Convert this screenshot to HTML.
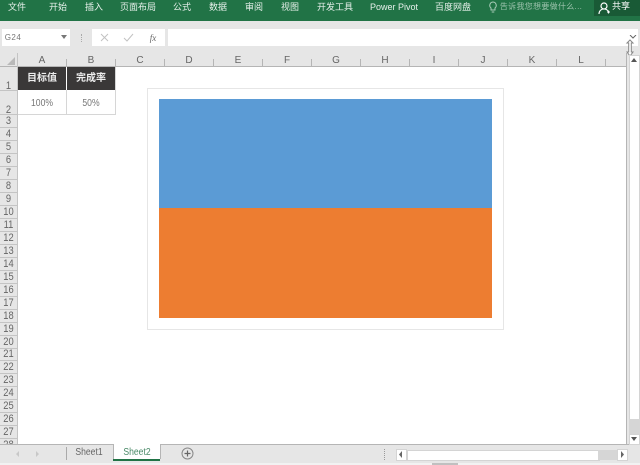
<!DOCTYPE html>
<html><head><meta charset="utf-8">
<style>
html,body{margin:0;padding:0;background:#fff}
#p{position:relative;width:640px;height:465px;overflow:hidden;background:#e6e6e6;font-family:"Liberation Sans","Noto Sans CJK SC",sans-serif;color:#444;filter:blur(.3px)}
#p div{position:absolute}
.t{white-space:nowrap;line-height:12px;font-size:9px;transform:translateX(-50%);text-align:center}
.s{transform:translateX(-50%) scaleX(.86)}
.r{color:#e6f0ea;top:1px}
.c{color:#666;top:55px;font-size:10px}
.n{color:#666;left:0;width:17px;text-align:center;font-size:11px;line-height:12px;transform:scaleX(.85)}
.hl{left:0;width:17px;height:1px;background:#c4c4c4}
.cl{top:59px;width:1px;height:7px;background:#b5b5b5}
</style></head>
<body><div id="p">
<div style="left:0;top:0;width:640px;height:21px;background:#217346"></div>
<div style="left:594px;top:0;width:46px;height:16px;background:#195a36"></div>
<div class="t r" style="left:17px">文件</div>
<div class="t r" style="left:58px">开始</div>
<div class="t r" style="left:94px">插入</div>
<div class="t r" style="left:138px">页面布局</div>
<div class="t r" style="left:182px">公式</div>
<div class="t r" style="left:218px">数据</div>
<div class="t r" style="left:254px">审阅</div>
<div class="t r" style="left:290px">视图</div>
<div class="t r" style="left:335px">开发工具</div>
<div class="t r" style="left:394px">Power Pivot</div>
<div class="t r" style="left:453px">百度网盘</div>
<div class="t" style="left:541px;top:1px;color:#9dc3ad;font-size:8px;letter-spacing:.3px">告诉我您想要做什么...</div>
<div class="t" style="left:621px;top:0;color:#fff">共享</div>
<svg style="position:absolute;left:487px;top:0" width="12" height="14" viewBox="0 0 12 14"><path d="M6 2a3.400 3.400 0 0 0-2 6v2h4V8a3.400 3.400 0 0 0-2-6zM4.700 12h2.600" fill="none" stroke="#a9cbb8"/></svg>
<svg style="position:absolute;left:598px;top:1px" width="12" height="14" viewBox="0 0 12 14"><circle cx="6" cy="5" r="3" fill="none" stroke="#fff" stroke-width="1.200"/><path d="M1 13c0-3 2-5 5-5 1.500 0 3 .5 4 2M9 11h3M10.500 9.500v3" fill="none" stroke="#fff" stroke-width="1.100"/></svg>

<div style="left:2px;top:29px;width:68px;height:17px;background:#fff"></div>
<div class="t" style="left:13px;top:32px;color:#777;font-size:8px;letter-spacing:.5px">G24</div>
<svg style="position:absolute;left:61px;top:35px" width="7" height="5"><path d="M0 0h6L3 4z" fill="#777"/></svg>
<div style="left:81px;top:34px;width:1px;height:8px;border-left:1px dotted #aaa"></div>
<div style="left:92px;top:29px;width:73px;height:17px;background:#fff"></div>
<svg style="position:absolute;left:99px;top:33px" width="66" height="10"><path d="M2 1l7 7M9 1L2 8" stroke="#c2c2c2" fill="none"/><path d="M25 5l3 3 6-7" stroke="#c2c2c2" fill="none"/></svg>
<div class="t" style="left:153px;top:32px;font-family:'Liberation Serif',serif;font-style:italic;color:#666;font-size:9px">fx</div>
<div style="left:168px;top:29px;width:470px;height:17px;background:#fff"></div>
<svg style="position:absolute;left:629px;top:35px" width="8" height="5"><path d="M1 0l3 3 3-3" stroke="#666" fill="none"/></svg>
<svg style="position:absolute;left:625px;top:39px" width="10" height="18"><path d="M5 1L8 4H6.300V13H8L5 17 2 13H3.700V4H2z" fill="#fff" stroke="#888"/></svg>

<div style="left:0;top:53px;width:626px;height:13px;background:#e6e6e6"></div>
<div style="left:17px;top:66px;width:609px;height:378px;background:#fff"></div>
<div style="left:0;top:66px;width:626px;height:1px;background:#b5b5b5"></div>
<div style="left:17px;top:53px;width:1px;height:391px;background:#c4c4c4"></div>
<div style="left:626px;top:53px;width:1px;height:391px;background:#b5b5b5"></div>
<svg style="position:absolute;left:7px;top:57px" width="9" height="9"><path d="M8 0v8H0z" fill="#b9b9b9"/></svg>

<div class="cl" style="left:66px"></div><div class="cl" style="left:115px"></div><div class="cl" style="left:164px"></div><div class="cl" style="left:213px"></div><div class="cl" style="left:262px"></div><div class="cl" style="left:311px"></div><div class="cl" style="left:360px"></div><div class="cl" style="left:409px"></div><div class="cl" style="left:458px"></div><div class="cl" style="left:507px"></div><div class="cl" style="left:556px"></div><div class="cl" style="left:605px"></div>
<div class="t c" style="left:42px">A</div><div class="t c" style="left:91px">B</div><div class="t c" style="left:140px">C</div><div class="t c" style="left:189px">D</div><div class="t c" style="left:238px">E</div><div class="t c" style="left:287px">F</div><div class="t c" style="left:336px">G</div><div class="t c" style="left:385px">H</div><div class="t c" style="left:434px">I</div><div class="t c" style="left:483px">J</div><div class="t c" style="left:532px">K</div><div class="t c" style="left:581px">L</div>

<div class="hl" style="top:90px"></div><div class="hl" style="top:114px"></div><div class="hl" style="top:127px"></div><div class="hl" style="top:140px"></div><div class="hl" style="top:153px"></div><div class="hl" style="top:166px"></div><div class="hl" style="top:179px"></div><div class="hl" style="top:192px"></div><div class="hl" style="top:205px"></div><div class="hl" style="top:218px"></div><div class="hl" style="top:231px"></div><div class="hl" style="top:244px"></div><div class="hl" style="top:257px"></div><div class="hl" style="top:270px"></div><div class="hl" style="top:283px"></div><div class="hl" style="top:296px"></div><div class="hl" style="top:309px"></div><div class="hl" style="top:322px"></div><div class="hl" style="top:335px"></div><div class="hl" style="top:348px"></div><div class="hl" style="top:360px"></div><div class="hl" style="top:373px"></div><div class="hl" style="top:386px"></div><div class="hl" style="top:399px"></div><div class="hl" style="top:412px"></div><div class="hl" style="top:425px"></div><div class="hl" style="top:438px"></div>
<div class="n" style="top:80px">1</div><div class="n" style="top:104px">2</div><div class="n" style="top:115px">3</div><div class="n" style="top:128px">4</div><div class="n" style="top:141px">5</div><div class="n" style="top:154px">6</div><div class="n" style="top:167px">7</div><div class="n" style="top:180px">8</div><div class="n" style="top:193px">9</div><div class="n" style="top:206px">10</div><div class="n" style="top:219px">11</div><div class="n" style="top:232px">12</div><div class="n" style="top:245px">13</div><div class="n" style="top:258px">14</div><div class="n" style="top:271px">15</div><div class="n" style="top:284px">16</div><div class="n" style="top:297px">17</div><div class="n" style="top:310px">18</div><div class="n" style="top:323px">19</div><div class="n" style="top:336px">20</div><div class="n" style="top:348px">21</div><div class="n" style="top:361px">22</div><div class="n" style="top:374px">23</div><div class="n" style="top:387px">24</div><div class="n" style="top:400px">25</div><div class="n" style="top:413px">26</div><div class="n" style="top:426px">27</div>
<div class="n" style="top:439px;height:5px;overflow:hidden">28</div>

<div style="left:18px;top:67px;width:48px;height:23px;background:#3a3838"></div>
<div style="left:67px;top:67px;width:48px;height:23px;background:#3a3838"></div>
<div class="t" style="left:42px;top:73px;color:#eee;font-size:10px;font-weight:bold">目标值</div>
<div class="t" style="left:91px;top:73px;color:#eee;font-size:10px;font-weight:bold">完成率</div>
<div class="t s" style="left:42px;top:98px;color:#777;font-size:10px">100%</div>
<div class="t s" style="left:91px;top:98px;color:#777;font-size:10px">50%</div>
<div style="left:66px;top:90px;width:1px;height:24px;background:#d6d6d6"></div>
<div style="left:115px;top:67px;width:1px;height:48px;background:#d6d6d6"></div>
<div style="left:18px;top:114px;width:98px;height:1px;background:#d6d6d6"></div>

<div style="left:147px;top:88px;width:355px;height:240px;background:#fff;border:1px solid #e6e6e6"></div>
<div style="left:159px;top:99px;width:333px;height:109px;background:#5b9bd5"></div>
<div style="left:159px;top:208px;width:333px;height:110px;background:#ed7d31"></div>

<div style="left:0;top:444px;width:640px;height:1px;background:#b5b5b5"></div>
<svg style="position:absolute;left:15px;top:450px" width="28" height="8"><path d="M4 1L1 4l3 3zM21 1l3 3-3 3z" fill="#c8c8c8"/></svg>
<div style="left:66px;top:447px;width:1px;height:13px;background:#aaa"></div>
<div style="left:113px;top:444px;width:46px;height:15px;background:#fff;border-left:1px solid #b5b5b5;border-right:1px solid #b5b5b5"></div>
<div style="left:113px;top:459px;width:47px;height:2px;background:#217346"></div>
<div class="t s" style="left:89px;top:447px;color:#666;font-size:10px">Sheet1</div>
<div class="t s" style="left:137px;top:447px;color:#4a8a68;font-size:10px">Sheet2</div>
<svg style="position:absolute;left:181px;top:447px" width="13" height="13"><circle cx="6.500" cy="6.500" r="5.500" fill="none" stroke="#888"/><path d="M3.500 6.500h6M6.500 3.500v6" stroke="#666" stroke-width="1.200"/></svg>
<div style="left:384px;top:449px;width:1px;height:11px;border-left:1px dotted #999"></div>

<div style="left:396px;top:449px;width:9px;height:10px;background:#fff;border:1px solid #d4d4d4"></div>
<svg style="position:absolute;left:398px;top:450px" width="6" height="9"><path d="M4 1L1 4.500 4 8z" fill="#666"/></svg>
<div style="left:407px;top:450px;width:191px;height:9px;background:#fff;border:1px solid #d4d4d4"></div>
<div style="left:598px;top:450px;width:19px;height:10px;background:#d6d6d6"></div>
<div style="left:617px;top:449px;width:9px;height:10px;background:#fff;border:1px solid #d4d4d4"></div>
<svg style="position:absolute;left:620px;top:450px" width="6" height="9"><path d="M1 1l3 3.500L1 8z" fill="#666"/></svg>
<div style="left:0;top:463px;width:640px;height:2px;background:#f2f2f2"></div>
<div style="left:432px;top:463px;width:26px;height:2px;background:#c0c0c0"></div>

<div style="left:629px;top:55px;width:9px;height:10px;background:#fff;border:1px solid #d4d4d4"></div>
<svg style="position:absolute;left:630px;top:58px" width="8" height="5"><path d="M4 0L7 4H1z" fill="#555"/></svg>
<div style="left:629px;top:66px;width:9px;height:353px;background:#fff;border-left:1px solid #d4d4d4;border-right:1px solid #d4d4d4"></div>
<div style="left:629px;top:419px;width:11px;height:15px;background:#d6d6d6"></div>
<div style="left:629px;top:434px;width:9px;height:9px;background:#fff;border:1px solid #d4d4d4"></div>
<svg style="position:absolute;left:630px;top:437px" width="8" height="5"><path d="M1 0h6L4 4z" fill="#555"/></svg>
</div></body></html>
